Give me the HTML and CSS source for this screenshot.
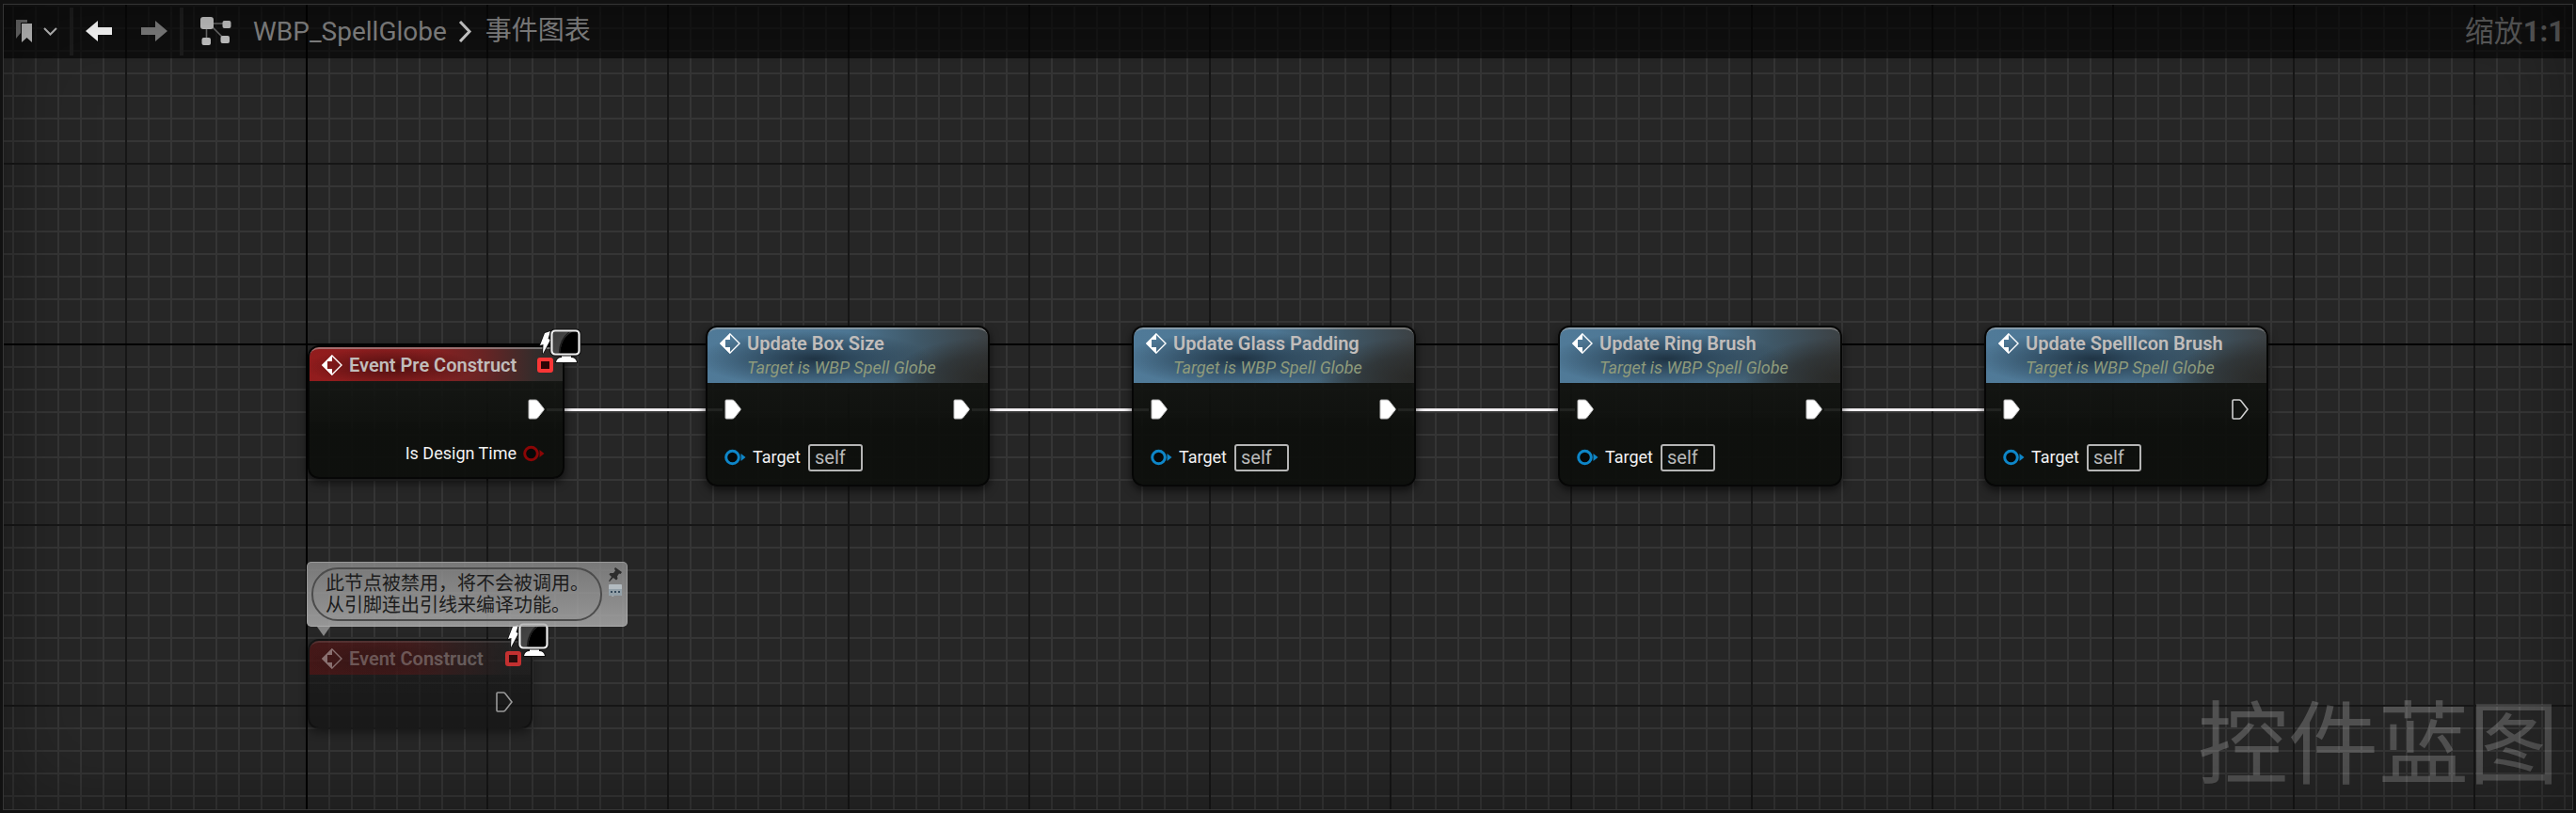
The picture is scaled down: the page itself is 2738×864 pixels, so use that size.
FILE: index.html
```
<!DOCTYPE html>
<html lang="zh-CN">
<head>
<meta charset="utf-8">
<title>WBP_SpellGlobe</title>
<link rel="stylesheet" href="styles.css">
</head>
<body>
<svg class="defs" width="0" height="0" aria-hidden="true">
  <defs>
    <symbol id="event" viewBox="0 0 22 22">
      <path d="M11 1 21 11 11 21 1 11Z" fill="none" stroke="#fff" stroke-width="1.4"/>
      <path d="M11 0V7H6V15H11V22L0 11Z" fill="#fff"/>
    </symbol>
    <symbol id="exec" viewBox="0 0 18 22">
      <path d="M1 2Q1 1 2 1H8Q9.500 1 10.500 2L17 10.200Q17.500 11 17 11.800L10.500 20Q9.500 21 8 21H2Q1 21 1 20Z" fill="#fff" stroke="#bdbdbd"/>
    </symbol>
    <symbol id="exec-open" viewBox="0 0 18 22">
      <path d="M1 2Q1 1 2 1H8Q9 1 10 2L17 11L10 20Q9 21 8 21H2Q1 21 1 20Z" fill="none" stroke="#d0d0d0" stroke-width="1.600"/>
    </symbol>
    <symbol id="pin" viewBox="0 0 23 18">
      <circle cx="8.500" cy="9" r="6.800" fill="#050808" stroke="currentColor" stroke-width="3"/>
      <path d="M17.500 5 22.500 9 17.500 13Z" fill="currentColor"/>
    </symbol>
    <linearGradient id="screen" x1="0" x2="1" y1="0" y2="1">
      <stop offset="0" stop-color="#3c3c3c"/><stop offset="1" stop-color="#4e4e4e"/>
    </linearGradient>
    <symbol id="monitor" viewBox="0 0 46 38">
      <path d="M7 5 13 3 10.500 11 13 12 5 27 5.500 17 2 18Z" fill="#fff" stroke="#111" stroke-width="1.600" paint-order="stroke"/>
      <path d="M25 27H35V31Q40 31 41 36H19Q20 31 25 31Z" fill="#fff" stroke="#111" stroke-width="2" paint-order="stroke"/>
      <rect x="12.500" y=".5" width="33" height="29" rx="5" fill="#111"/>
      <rect x="14.500" y="2.500" width="29" height="25" rx="3.500" fill="#000"/>
      <path d="M17 3.500H37Q25 8 23 26.500H17Q15.500 26.500 15.500 25V5Q15.500 3.500 17 3.500Z" fill="url(#screen)"/>
      <path d="M33 4Q23 12 22.500 26" fill="none" stroke="#1c1c1c" stroke-width="1.500"/>
      <rect x="14.500" y="2.500" width="29" height="25" rx="3.500" fill="none" stroke="#efefef" stroke-width="2.200"/>
    </symbol>
  </defs>
</svg>

<main class="graph">
  <div class="axis axis-x"></div>
  <div class="axis axis-y"></div>
  <p class="watermark">控件蓝图</p>

  <div class="wire wire-1"></div>
  <div class="wire wire-2"></div>
  <div class="wire wire-3"></div>
  <div class="wire wire-4"></div>

  <article class="node event pre-construct">
    <header class="head">
      <svg class="glyph"><use href="#event"/></svg>
      <h2 class="title">Event Pre Construct</h2>
      <span class="delegate"></span>
    </header>
    <div class="row row-exec out"><svg class="exec"><use href="#exec"/></svg></div>
    <div class="row row-bool out"><span>Is Design Time</span><svg class="pin red"><use href="#pin"/></svg></div>
    <svg class="monitor"><use href="#monitor"/></svg>
  </article>

  <article class="node call box-size">
    <header class="head">
      <svg class="glyph"><use href="#event"/></svg>
      <h2 class="title">Update Box Size</h2>
      <p class="subtitle">Target is WBP Spell Globe</p>
    </header>
    <div class="row row-exec"><svg class="exec"><use href="#exec"/></svg><svg class="exec"><use href="#exec"/></svg></div>
    <div class="row row-target"><svg class="pin blue"><use href="#pin"/></svg><label for="t1">Target</label><input class="self" id="t1" value="self"></div>
  </article>

  <article class="node call glass-padding">
    <header class="head">
      <svg class="glyph"><use href="#event"/></svg>
      <h2 class="title">Update Glass Padding</h2>
      <p class="subtitle">Target is WBP Spell Globe</p>
    </header>
    <div class="row row-exec"><svg class="exec"><use href="#exec"/></svg><svg class="exec"><use href="#exec"/></svg></div>
    <div class="row row-target"><svg class="pin blue"><use href="#pin"/></svg><label for="t2">Target</label><input class="self" id="t2" value="self"></div>
  </article>

  <article class="node call ring-brush">
    <header class="head">
      <svg class="glyph"><use href="#event"/></svg>
      <h2 class="title">Update Ring Brush</h2>
      <p class="subtitle">Target is WBP Spell Globe</p>
    </header>
    <div class="row row-exec"><svg class="exec"><use href="#exec"/></svg><svg class="exec"><use href="#exec"/></svg></div>
    <div class="row row-target"><svg class="pin blue"><use href="#pin"/></svg><label for="t3">Target</label><input class="self" id="t3" value="self"></div>
  </article>

  <article class="node call icon-brush">
    <header class="head">
      <svg class="glyph"><use href="#event"/></svg>
      <h2 class="title">Update SpellIcon Brush</h2>
      <p class="subtitle">Target is WBP Spell Globe</p>
    </header>
    <div class="row row-exec"><svg class="exec"><use href="#exec"/></svg><svg class="exec"><use href="#exec-open"/></svg></div>
    <div class="row row-target"><svg class="pin blue"><use href="#pin"/></svg><label for="t4">Target</label><input class="self" id="t4" value="self"></div>
  </article>

  <article class="node event construct">
    <header class="head">
      <svg class="glyph"><use href="#event"/></svg>
      <h2 class="title">Event Construct</h2>
      <span class="delegate"></span>
    </header>
    <div class="row row-exec out"><svg class="exec"><use href="#exec-open"/></svg></div>
    <svg class="monitor"><use href="#monitor"/></svg>
  </article>

  <aside class="bubble">
    <p class="note">此节点被禁用，将不会被调用。<br>从引脚连出引线来编译功能。</p>
    <div class="tools">
      <button class="tool" aria-label="固定"><svg width="14" height="15" viewBox="0 0 14 15"><path d="M7 0 14 5 12.500 7 11 6.500 9 9.500 9.500 12 8 13.500 4.800 11 1 15 0 14.500 3 10 .5 7.500 1.500 6 5 6 7 3.500 6 1.500Z" fill="#2c2c2c"/></svg></button>
      <button class="tool" aria-label="注释"><svg width="14" height="13" viewBox="0 0 14 13"><path d="M1 0H13Q14 0 14 1V11Q14 12 13 12H6L4 13 3 12H1Q0 12 0 11V1Q0 0 1 0Z" fill="#b3bbc0"/><path d="M0 5H14V11Q14 12 13 12H1Q0 12 0 11Z" fill="#93a0a8"/><path d="M2 7H4V9H2ZM6 7H8V9H6ZM10 7H12V9H10Z" fill="#33485a"/></svg></button>
    </div>
  </aside>

  <nav class="toolbar">
    <button class="btn bookmarks" aria-label="书签">
      <svg width="18" height="24" viewBox="0 0 18 24"><path d="M0 0H12V3H5V14L0 20Z" fill="#6c6c6c"/><path d="M6 4H17V24L11.500 19 6 24Z" fill="#c2c2c2"/></svg>
      <svg width="15" height="9" viewBox="0 0 15 9"><path d="M1 1 7.500 7.500 14 1" fill="none" stroke="#bdbdbd" stroke-width="2"/></svg>
    </button>
    <span class="sep"></span>
    <button class="btn back" aria-label="后退"><svg width="28" height="22" viewBox="0 0 28 22"><path d="M0 11 13 0V7H28V15H13V22Z" fill="#fff"/></svg></button>
    <button class="btn forward" aria-label="前进"><svg width="28" height="22" viewBox="0 0 28 22"><path d="M28 11 15 0V7H0V15H15V22Z" fill="#7c7c7c"/></svg></button>
    <span class="sep"></span>
    <svg class="graph-icon" width="33" height="30" viewBox="0 0 33 30"><path d="M7 7H28M6.500 7V26M10 8 26 24" fill="none" stroke="#6a6a6a" stroke-width="1.600"/><g fill="#c3c3c3"><rect width="14" height="13" rx="3"/><rect x="23.500" y="4" width="9" height="8" rx="2"/><rect x="1.500" y="22" width="9.500" height="8" rx="2"/><rect x="21.500" y="20" width="9.500" height="8" rx="2"/></g></svg>
    <a class="crumb" href="#">WBP_SpellGlobe</a>
    <svg class="crumb-sep" width="15" height="23" viewBox="0 0 15 23"><path d="M2 1 12 11.500 2 22" fill="none" stroke="#cfcfcf" stroke-width="3"/></svg>
    <a class="crumb crumb-zh" href="#">事件图表</a>
    <span class="zoom">缩放<b>1:1</b></span>
  </nav>
  <div class="frame"></div>
</main>
</body>
</html>
```
FILE: styles.css
```
* { box-sizing: border-box; }
body { margin: 0; background: #111; font-family: Roboto, "Noto Sans CJK SC", sans-serif; }
h2, p { margin: 0; font-weight: inherit; }
button { padding: 0; border: 0; background: none; }
a { text-decoration: none; color: inherit; }
svg { display: block; flex: none; }
.defs { position: absolute; }

.graph {
  position: relative;
  min-height: 100vh;
  overflow: hidden;
  background-color: #262626;
  background-image:
    linear-gradient(#161616 2px, transparent 2px),
    linear-gradient(90deg, #161616 2px, transparent 2px),
    linear-gradient(#353535 2px, transparent 2px),
    linear-gradient(90deg, #353535 2px, transparent 2px);
  background-size: 192px 192px, 192px 192px, 24px 24px, 24px 24px;
  background-position: 325px 365px;
}
.axis { position: absolute; background: #000; }
.axis-x { left: 0; right: 0; top: 365px; height: 2px; }
.axis-y { top: 0; bottom: 0; left: 325px; width: 2px; }
.frame {
  position: absolute;
  inset: 0;
  pointer-events: none;
  border: 3px solid #111;
  border-top-width: 4px;
  box-shadow: inset 0 0 0 1px #353535, inset 0 0 90px rgba(0, 0, 0, .35);
}
.watermark {
  position: absolute;
  right: 18px;
  bottom: 12px;
  font-size: 96px;
  line-height: 120px;
  color: rgba(255, 255, 255, .2);
}

.toolbar {
  position: absolute;
  inset: 0 0 auto;
  height: 62px;
  padding: 4px 12px 0 17px;
  display: flex;
  align-items: center;
  background: rgba(0, 0, 0, .6);
  color: #838383;
  font-size: 28px;
}
.btn { display: flex; align-items: center; }
.bookmarks { gap: 11px; }
.sep { width: 4px; height: 51px; margin: 0 13px; background: #1d1d1d; }
.back { margin-right: 31px; }
.graph-icon { margin: 0 23px 0 5px; }
.crumb-sep { margin: 0 14px 0 12px; }
.crumb-zh, .zoom { padding-bottom: 6px; }
.zoom { margin-left: auto; font-size: 31px; color: #5b5b5b; }

.wire { position: absolute; top: 434px; height: 3px; background: #f1eef1; }
.wire-1 { left: 581px; width: 187px; }
.wire-2 { left: 1033px; width: 188px; }
.wire-3 { left: 1486px; width: 188px; }
.wire-4 { left: 1939px; width: 188px; }

.node {
  position: absolute;
  border: 2px solid rgba(5, 5, 5, .85);
  border-radius: 12px;
  background: linear-gradient(rgba(24, 26, 23, .88), rgba(13, 15, 12, .93) 65%);
  box-shadow: 0 4px 10px rgba(0, 0, 0, .6);
  color: #f2f2f2;
  font-size: 18px;
  line-height: 24px;
}
.pre-construct { left: 327px; top: 367px; min-width: 273px; padding-bottom: 8px; }
.call { top: 346px; min-width: 302px; padding-bottom: 6px; }
.box-size { left: 750px; }
.glass-padding { left: 1203px; }
.ring-brush { left: 1656px; }
.icon-brush { left: 2109px; }
.construct {
  left: 327px;
  top: 679px;
  min-width: 239px;
  border-color: rgba(12, 12, 12, .5);
  background: linear-gradient(rgba(26, 26, 26, .45), rgba(20, 20, 20, .65) 65%);
  box-shadow: 0 4px 10px rgba(0, 0, 0, .35);
}

.head {
  display: grid;
  grid-template-columns: 22px 1fr auto;
  column-gap: 7px;
  align-items: center;
  border-radius: 10px 10px 0 0;
  border-top: 2px solid rgba(190, 190, 190, .5);
}
.event .head {
  height: 36px;
  padding: 0 10px 1px 13px;
  background:
    radial-gradient(ellipse 34% 60% at 32% 55%, rgba(35, 5, 5, .6), transparent),
    linear-gradient(90deg, #921c1d, #8c2021 45%, #6a2424 68%, #322c2b 90%, #2b2b29);
}
.construct .head {
  border-top-color: rgba(190, 190, 190, .15);
  background:
    radial-gradient(ellipse 34% 60% at 32% 55%, rgba(30, 15, 15, .4), transparent),
    linear-gradient(90deg, rgba(92, 20, 20, .62), rgba(88, 26, 26, .6) 45%, rgba(60, 32, 32, .55) 68%, rgba(40, 38, 38, .4) 90%);
}
.construct .title, .construct .glyph { opacity: .38; }
.construct .delegate { opacity: .75; }
.construct .exec { opacity: .7; }
.call .head {
  height: 59px;
  padding: 2px 12px 2px 13px;
  background:
    radial-gradient(ellipse 42% 52% at 38% 55%, rgba(20, 35, 48, .8), transparent),
    radial-gradient(ellipse 34% 75% at 100% 90%, rgba(40, 40, 38, .95), rgba(40, 40, 38, .6) 55%, transparent),
    linear-gradient(90deg, #507a98, #4d7693 50%, #3f5868 75%, #3c4144);
}
.glyph { width: 22px; height: 22px; }
.title { font-size: 20px; font-weight: 600; color: #c1bdbb; white-space: nowrap; }
.subtitle { grid-column: 2 / 4; font-style: italic; line-height: 26px; color: #8e9a7b; white-space: nowrap; }
.delegate { width: 17px; height: 16px; border: 4px solid #f93636; border-radius: 3px; background: #2a0505; }

.row { display: flex; align-items: center; padding: 0 19px 0 18px; }
.out { justify-content: flex-end; }
.row-exec { height: 56px; justify-content: space-between; }
.event .row-exec { height: 60px; justify-content: flex-end; }
.construct .row-exec { height: 56px; padding-top: 2px; }
.row-bool { height: 34px; gap: 7px; }
.row-target { height: 46px; gap: 7px; }
.exec { width: 18px; height: 22px; }
.pin { width: 23px; height: 18px; }
.red { color: #8a0606; }
.blue { color: #0e86c8; }
.self {
  width: 58px;
  height: 29px;
  margin-left: 1px;
  padding: 0 5px;
  border: 2px solid #b5b5b5;
  border-radius: 3px;
  background: transparent;
  color: #b9b9b9;
  font: 20px/24px Roboto, sans-serif;
}
.monitor { position: absolute; width: 46px; height: 38px; top: -20px; right: -20px; }

.bubble {
  position: absolute;
  left: 326px;
  top: 597px;
  display: flex;
  gap: 7px;
  padding: 6px 6px 6px 5px;
  border-radius: 5px;
  background: linear-gradient(rgba(140, 140, 140, .8), rgba(178, 178, 178, .8));
  box-shadow: inset 0 0 0 1px rgba(200, 200, 200, .4);
}
.bubble::after {
  content: "";
  position: absolute;
  left: 11px;
  top: 100%;
  border: solid transparent;
  border-width: 10px 7px 0;
  border-top-color: #858585;
}
.note {
  padding: 4px 12px 3px 13px;
  min-width: 308px;
  border: 2px solid #4c4c4c;
  border-radius: 28px;
  color: #1c1c1c;
  font-size: 20px;
  line-height: 23px;
  white-space: nowrap;
}
.tools { display: flex; flex-direction: column; gap: 3px; }
```
